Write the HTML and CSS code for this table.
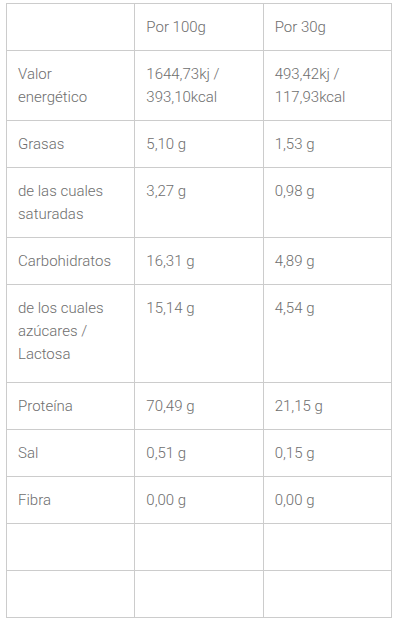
FILE: index.html
```html
<!DOCTYPE html>
<html lang="es">
<head>
<meta charset="utf-8">
<title>Información nutricional</title>
<link rel="stylesheet" href="styles.css">
</head>
<body>
<table class="nutri">
  <tbody>
    <tr><td></td><td>Por 100g</td><td>Por 30g</td></tr>
    <tr><td>Valor energético</td><td>1644,73kj / 393,10kcal</td><td>493,42kj / 117,93kcal</td></tr>
    <tr><td>Grasas</td><td>5,10 g</td><td>1,53 g</td></tr>
    <tr><td>de las cuales saturadas</td><td>3,27 g</td><td>0,98 g</td></tr>
    <tr><td>Carbohidratos</td><td>16,31 g</td><td>4,89 g</td></tr>
    <tr class="tall"><td>de los cuales azúcares / Lactosa</td><td>15,14 g</td><td>4,54 g</td></tr>
    <tr><td>Proteína</td><td>70,49 g</td><td>21,15 g</td></tr>
    <tr><td>Sal</td><td>0,51 g</td><td>0,15 g</td></tr>
    <tr><td>Fibra</td><td>0,00 g</td><td>0,00 g</td></tr>
    <tr><td></td><td></td><td></td></tr>
    <tr><td></td><td></td><td></td></tr>
  </tbody>
</table>
</body>
</html>
```
FILE: styles.css
```css
html, body {
  margin: 0;
  background: #ffffff;
}
body {
  padding: 3px 0 0 6px;
  font-family: Roboto, "Liberation Sans", sans-serif;
  font-size: 15px;
  font-weight: 300;
  color: #6e6e6e;
}
.nutri {
  width: 386px;
  table-layout: fixed;
  border-collapse: collapse;
}
.nutri td {
  border: 1px solid #cccccc;
  padding: 12px 11px 11px 11px;
  line-height: 23px;
  height: 23px;
  vertical-align: top;
  box-sizing: content-box;
}
.nutri tr.tall td {
  padding-bottom: 16px;
}
```
